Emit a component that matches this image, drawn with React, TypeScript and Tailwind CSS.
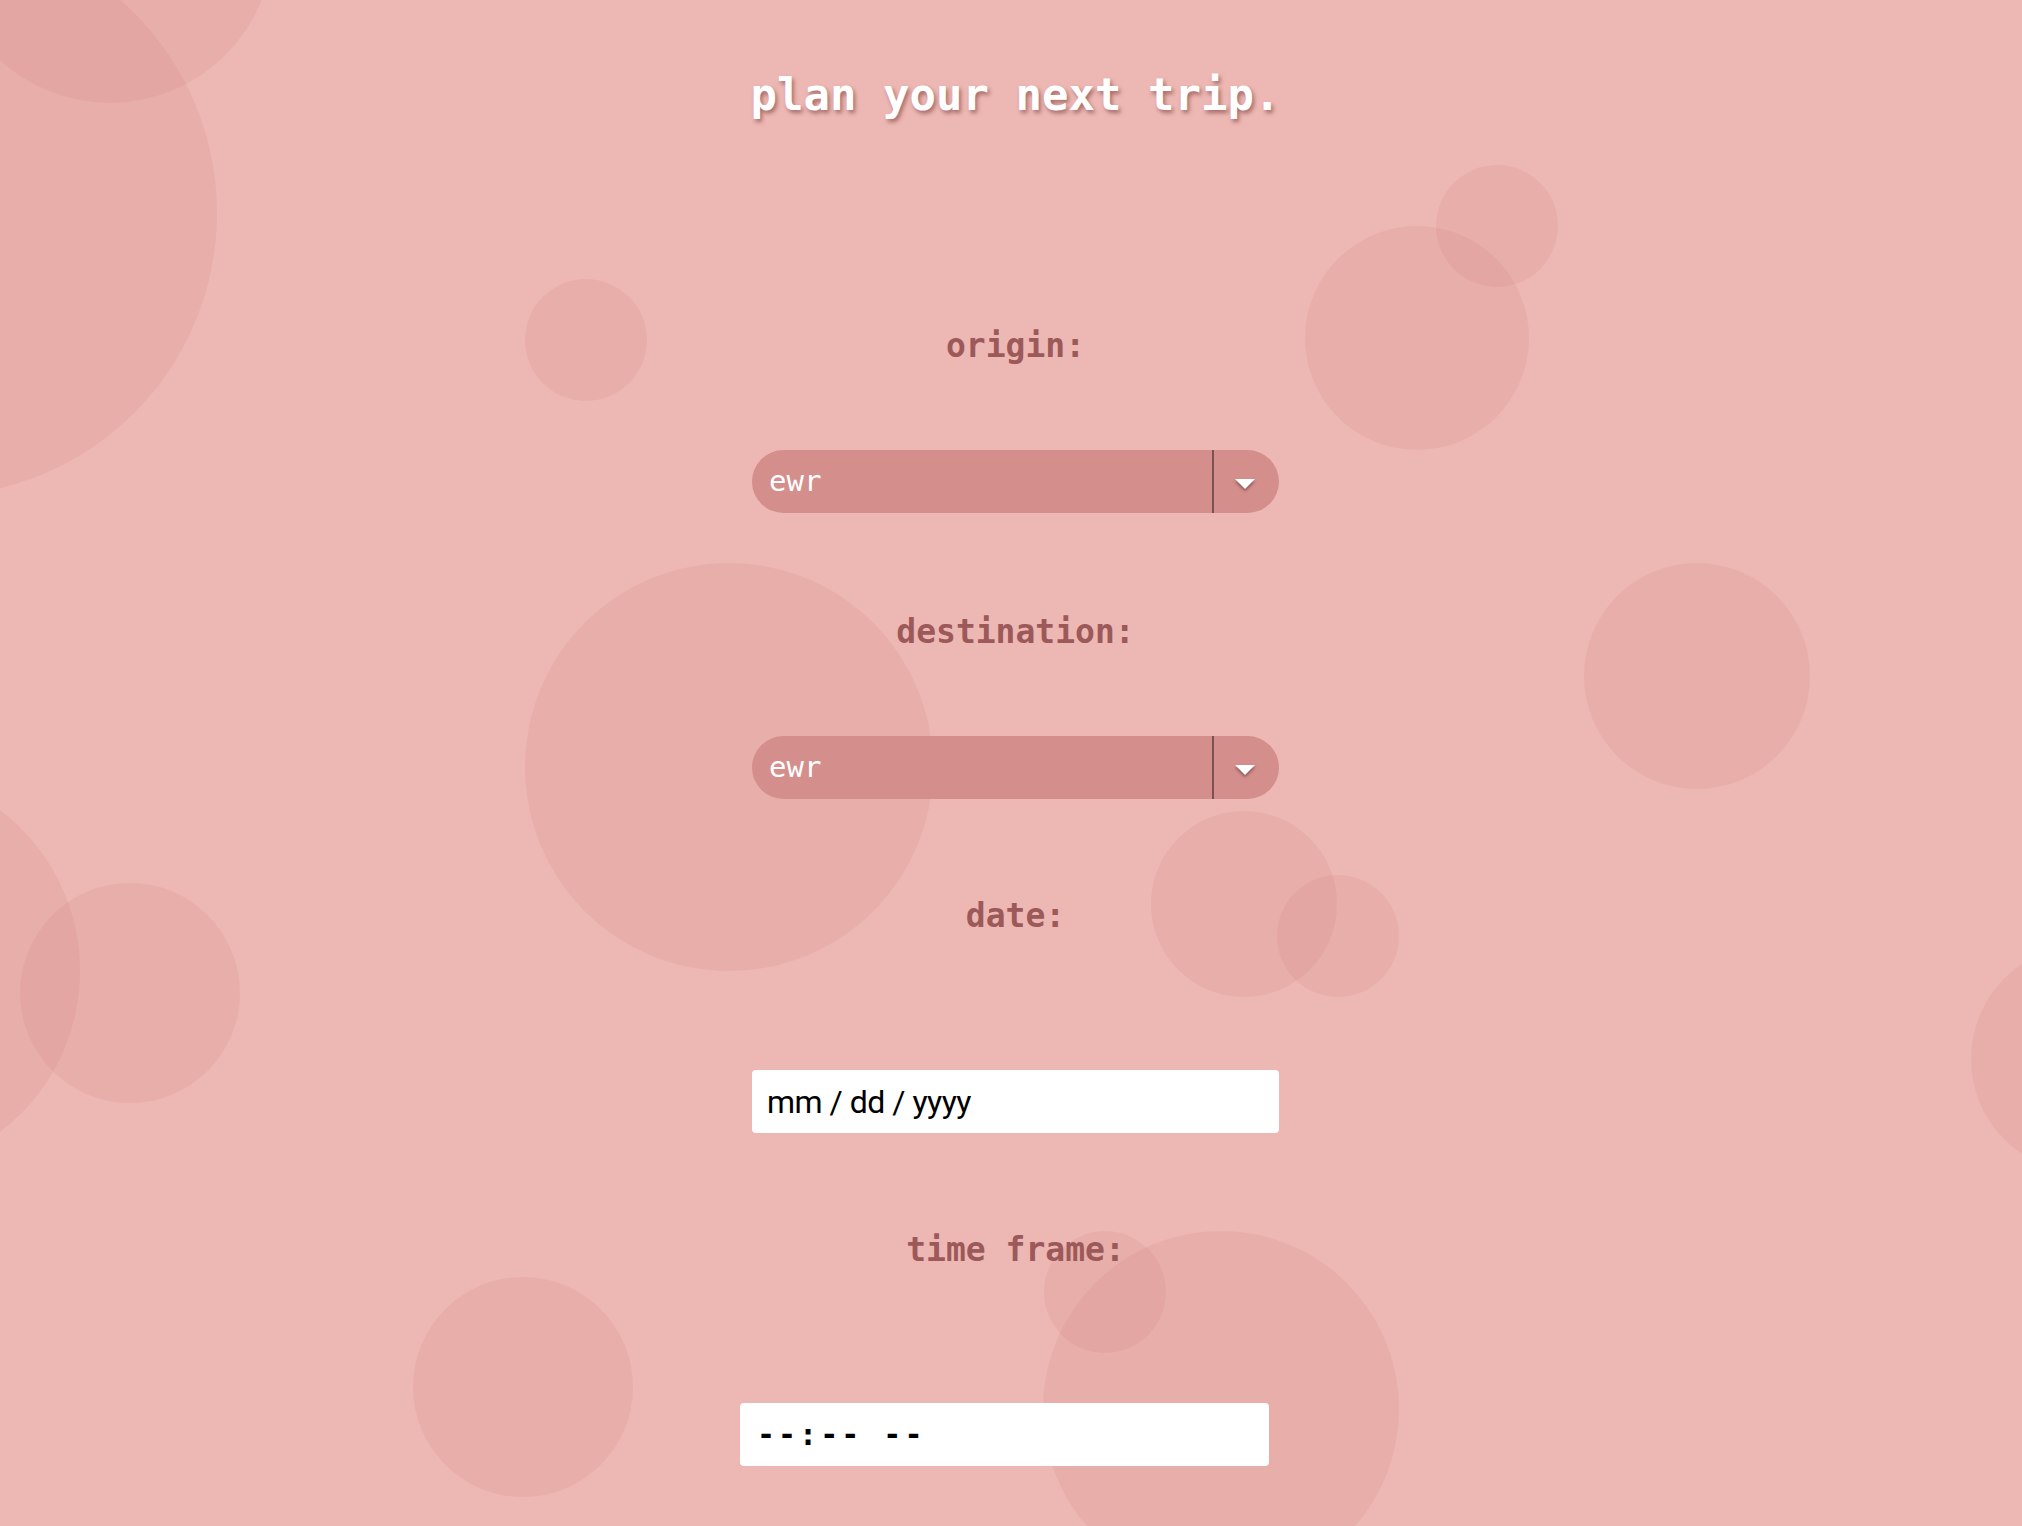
const bubbles = [
  { cx: 110, cy: -60, r: 163 },
  { cx: -66, cy: 213, r: 283 },
  { cx: 586, cy: 340, r: 61 },
  { cx: 1497, cy: 226, r: 61 },
  { cx: 1417, cy: 338, r: 112 },
  { cx: 729, cy: 767, r: 204 },
  { cx: 1697, cy: 676, r: 113 },
  { cx: 1244, cy: 904, r: 93 },
  { cx: 1338, cy: 936, r: 61 },
  { cx: -122, cy: 971, r: 202 },
  { cx: 130, cy: 993, r: 110 },
  { cx: 2085, cy: 1059, r: 114 },
  { cx: 523, cy: 1387, r: 110 },
  { cx: 1105, cy: 1292, r: 61 },
  { cx: 1221, cy: 1409, r: 178 },
];

const mono = "font-['DejaVu_Sans_Mono','Liberation_Mono',monospace]";

function Label({ children, className = "" }: { children: string; className?: string }) {
  return (
    <div
      className={`${mono} text-[33px] leading-[40px] font-bold text-[#9c5959] ${className}`}
    >
      {children}
    </div>
  );
}

function SelectBox({ value, className = "" }: { value: string; className?: string }) {
  return (
    <div
      className={`flex h-[63px] w-[527px] items-stretch rounded-full bg-[#d48e8c] ${className}`}
    >
      <div className={`flex flex-1 items-center pl-[17px] ${mono} text-[29px] text-white`}>
        {value}
      </div>
      <div className="w-[2px] bg-[#7d5151]" />
      <div className="flex w-[65px] items-center justify-center pt-[6px] pr-[3px]">
        <svg width="24" height="15" viewBox="0 0 24 15" className="drop-shadow-[0_2px_1.5px_rgba(80,40,40,0.6)]">
          <path d="M2 2 L22 2 L12 12 Z" fill="#ffffff" />
        </svg>
      </div>
    </div>
  );
}

export default function App() {
  return (
    <div className="relative h-[1526px] w-full overflow-hidden bg-[#edb8b3]">
      <svg className="absolute inset-0 h-full w-full" aria-hidden="true">
        {bubbles.map((b, i) => (
          <circle key={i} cx={b.cx} cy={b.cy} r={b.r} fill="#d2787c" fillOpacity={0.15} />
        ))}
      </svg>

      <div className="relative flex flex-col items-center pl-[9px] pt-[69px]">
        <h1
          className={`${mono} text-[44px] leading-[52px] font-bold text-white [text-shadow:2px_3px_4px_rgba(120,55,55,0.6)]`}
        >
          plan your next trip.
        </h1>

        <Label className="mt-[205px]">origin:</Label>
        <SelectBox value="ewr" className="mt-[84px]" />

        <Label className="mt-[99px]">destination:</Label>
        <SelectBox value="ewr" className="mt-[84px]" />

        <Label className="mt-[97px]">date:</Label>
        <div className="mt-[134px] flex h-[63px] w-[527px] items-center rounded-[4px] bg-white pl-[15px] font-['Roboto','Liberation_Sans',sans-serif] text-[32px] tracking-[-0.5px] text-black">
          mm / dd / yyyy
        </div>

        <Label className="mt-[97px]">time frame:</Label>
        <div
          className={`mt-[133px] mr-[22px] flex h-[63px] w-[529px] items-center rounded-[4px] bg-white pl-[17px] ${mono} text-[30px] font-bold tracking-[3px] text-black`}
        >
          --:-- --
        </div>
      </div>
    </div>
  );
}
